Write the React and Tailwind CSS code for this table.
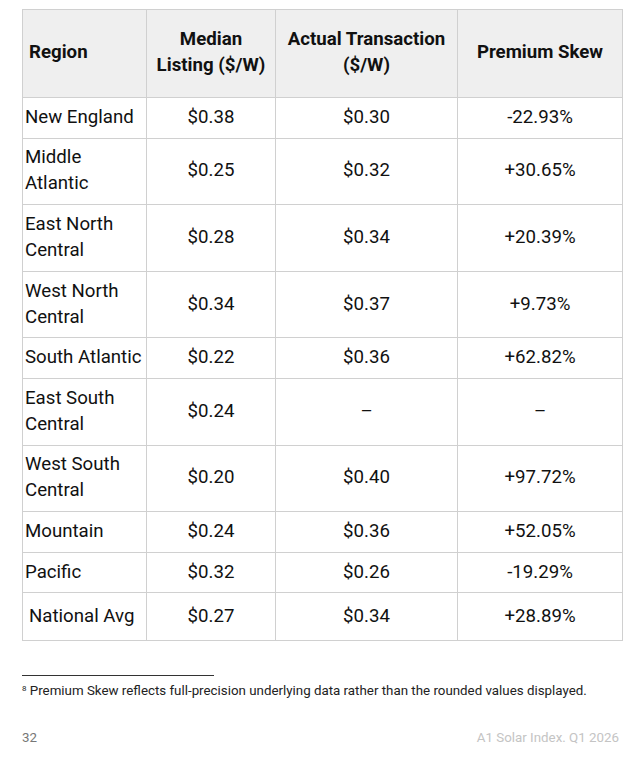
const rows = [
  ["New England", "$0.38", "$0.30", "-22.93%"],
  ["Middle Atlantic", "$0.25", "$0.32", "+30.65%"],
  ["East North Central", "$0.28", "$0.34", "+20.39%"],
  ["West North Central", "$0.34", "$0.37", "+9.73%"],
  ["South Atlantic", "$0.22", "$0.36", "+62.82%"],
  ["East South Central", "$0.24", "–", "–"],
  ["West South Central", "$0.20", "$0.40", "+97.72%"],
  ["Mountain", "$0.24", "$0.36", "+52.05%"],
  ["Pacific", "$0.32", "$0.26", "-19.29%"],
]

const App = () => {
  return (
    <div className="w-[641px] h-[757px] bg-white pt-[9px] px-[22px] text-[#111] font-['Roboto',sans-serif]">
      <table className="w-[600px] table-fixed border-collapse text-[18.67px] leading-[26px]">
        <colgroup>
          <col className="w-[124px]" />
          <col className="w-[129px]" />
          <col className="w-[182px]" />
          <col className="w-[165px]" />
        </colgroup>
        <thead>
          <tr className="bg-[#efefef] h-[88px]">
            <th className="border border-[#d0d0d0] px-[6px] pb-[3px] text-left font-bold">Region</th>
            <th className="border border-[#d0d0d0] px-[6px] pb-[3px] text-center font-bold">Median Listing ($/W)</th>
            <th className="border border-[#d0d0d0] px-[6px] pb-[3px] text-center font-bold">Actual Transaction ($/W)</th>
            <th className="border border-[#d0d0d0] px-[6px] pb-[3px] text-center font-bold">Premium Skew</th>
          </tr>
        </thead>
        <tbody>
          {rows.map((r) => (
            <tr key={r[0]}>
              <td className="border border-[#d0d0d0] pt-[5.8px] pb-[7.8px] pl-[2px] pr-[2px] text-left">{r[0]}</td>
              <td className="border border-[#d0d0d0] pt-[5.8px] pb-[7.8px] text-center">{r[1]}</td>
              <td className="border border-[#d0d0d0] pt-[5.8px] pb-[7.8px] text-center">{r[2]}</td>
              <td className="border border-[#d0d0d0] pt-[5.8px] pb-[7.8px] text-center">{r[3]}</td>
            </tr>
          ))}
          <tr className="h-[48px]">
            <td className="border border-[#d0d0d0] pl-[6px] pb-[2px] text-left">National Avg</td>
            <td className="border border-[#d0d0d0] pb-[2px] text-center">$0.27</td>
            <td className="border border-[#d0d0d0] pb-[2px] text-center">$0.34</td>
            <td className="border border-[#d0d0d0] pb-[2px] text-center">+28.89%</td>
          </tr>
        </tbody>
      </table>

      <div className="mt-[34px] w-[192px] border-t border-[#333]" />
      <p className="mt-[6px] text-[13.33px] leading-[18px] text-[#222]">
        <sup className="text-[8px]">8</sup> Premium Skew reflects full-precision underlying data rather than the rounded values displayed.
      </p>

      <div className="mt-[29px] flex justify-between text-[13.33px] leading-[18px]">
        <span className="text-[#777]">32</span>
        <span className="text-[#c4c4c4]">A1 Solar Index. Q1 2026</span>
      </div>
    </div>
  )
}

export default App
